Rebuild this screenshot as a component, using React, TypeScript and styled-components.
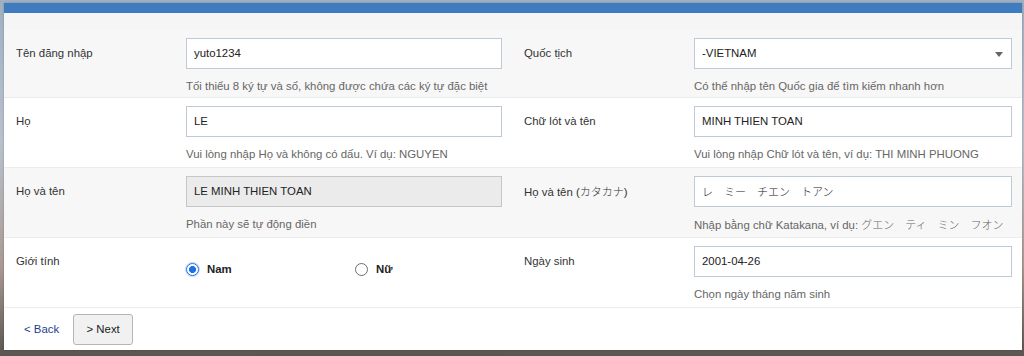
import React, { FC } from 'react';
import styled, { createGlobalStyle } from 'styled-components';

const GlobalStyle = createGlobalStyle`
	html, body {
		margin: 0;
		padding: 0;
	}
	body {
		width: 1024px;
		height: 356px;
		overflow: hidden;
		background: linear-gradient(180deg, #9fb0c2 0%, #b8c2cc 40%, #a99a92 75%, #5a5450 100%);
		font-family: 'Liberation Sans', Arial, 'Noto Sans CJK JP', sans-serif;
		color: #333;
	}
`;

const Panel = styled.div`
	margin: 3px 2px 0 4px;
	width: 1018px;
	background: #fff;
	box-shadow: 0 0 2px rgba(0, 0, 0, 0.25);
`;

const TopBar = styled.div`
	height: 10px;
	background: #3e7bbf;
`;

const HeadStrip = styled.div`
	height: 17px;
	background: #f5f5f5;
`;

const Row = styled.div<{ $shade?: boolean; $h: number }>`
	display: grid;
	grid-template-columns: 508px 510px;
	height: ${(p) => p.$h}px;
	box-sizing: border-box;
	background: ${(p) => (p.$shade ? '#f7f7f7' : '#fff')};
	border-bottom: 1px solid #ececec;
`;

const Cell = styled.div`
	display: grid;
	grid-template-columns: 170px minmax(0, 1fr);
	align-content: start;
	padding: 8px 10px 0 12px;
	min-width: 0;
`;

const Label = styled.div`
	font-size: 11.4px;
	line-height: 31px;
	color: #333;
	white-space: nowrap;
`;

const Field = styled.div`
	display: flex;
	flex-direction: column;
	min-width: 0;
`;

const Input = styled.div<{ $disabled?: boolean; $jp?: boolean }>`
	position: relative;
	height: 31px;
	box-sizing: border-box;
	border: 1px solid ${(p) => (p.$disabled ? '#c6c6c6' : '#bfcad8')};
	background: ${(p) => (p.$disabled ? '#ebebeb' : '#fff')};
	padding: 0 7px;
	font-size: ${(p) => (p.$jp ? '11px' : '11.4px')};
	line-height: 29px;
	color: #222;
	white-space: pre;
	font-family: ${(p) =>
		p.$jp ? "'Noto Sans CJK JP', sans-serif" : "'Liberation Sans', Arial, sans-serif"};
	font-weight: ${(p) => (p.$jp ? 300 : 400)};
`;

const Caret = styled.span`
	position: absolute;
	right: 8px;
	top: 13px;
	width: 0;
	height: 0;
	border-left: 4.5px solid transparent;
	border-right: 4.5px solid transparent;
	border-top: 5px solid #666;
`;

const Hint = styled.div`
	margin-top: 10px;
	font-size: 11.4px;
	line-height: 15px;
	color: #666;
	white-space: nowrap;
`;

const Jp = styled.span`
	font-family: 'Noto Sans CJK JP', sans-serif;
	font-weight: 300;
	font-size: 11px;
`;

const RadioGroup = styled.div`
	display: grid;
	grid-template-columns: 169px 1fr;
	padding-top: 15px;
`;

const RadioItem = styled.label`
	display: flex;
	align-items: center;
	gap: 8px;
	font-size: 11.4px;
	font-weight: bold;
	color: #222;
`;

const RadioDot = styled.span<{ $checked?: boolean }>`
	width: 13px;
	height: 13px;
	box-sizing: border-box;
	border-radius: 50%;
	border: ${(p) => (p.$checked ? '1.5px solid #1f6fe5' : '1px solid #6e6e6e')};
	background: ${(p) =>
		p.$checked ? 'radial-gradient(circle, #1f6fe5 0 3.2px, #fff 3.8px)' : '#fff'};
	box-shadow: ${(p) => (p.$checked ? '0 0 0 1px rgba(31, 111, 229, 0.25)' : 'none')};
`;

const Footer = styled.div`
	display: flex;
	align-items: center;
	gap: 14px;
	height: 42px;
	padding-left: 20px;
`;

const BackLink = styled.a`
	font-size: 11.4px;
	color: #1d3f8c;
	text-decoration: none;
`;

const NextButton = styled.button`
	width: 60px;
	height: 31px;
	border: 1px solid #b5b5b5;
	border-radius: 3px;
	background: #f1f1f1;
	font-family: 'Liberation Sans', Arial, sans-serif;
	font-size: 11.4px;
	color: #222;
`;

const App: FC = () => {
	return (
		<>
			<GlobalStyle />
			<Panel>
				<TopBar />
				<HeadStrip />
				<Row $shade $h={68}>
					<Cell>
						<Label>Tên đăng nhập</Label>
						<Field>
							<Input>yuto1234</Input>
							<Hint>Tối thiểu 8 ký tự và số, không được chứa các ký tự đặc biệt</Hint>
						</Field>
					</Cell>
					<Cell>
						<Label>Quốc tịch</Label>
						<Field>
							<Input>
								-VIETNAM
								<Caret />
							</Input>
							<Hint>Có thể nhập tên Quốc gia để tìm kiếm nhanh hơn</Hint>
						</Field>
					</Cell>
				</Row>
				<Row $h={70}>
					<Cell>
						<Label>Họ</Label>
						<Field>
							<Input>LE</Input>
							<Hint>Vui lòng nhập Họ và không có dấu. Ví dụ: NGUYEN</Hint>
						</Field>
					</Cell>
					<Cell>
						<Label>Chữ lót và tên</Label>
						<Field>
							<Input>MINH THIEN TOAN</Input>
							<Hint>Vui lòng nhập Chữ lót và tên, ví dụ: THI MINH PHUONG</Hint>
						</Field>
					</Cell>
				</Row>
				<Row $shade $h={70}>
					<Cell>
						<Label>Họ và tên</Label>
						<Field>
							<Input $disabled>LE MINH THIEN TOAN</Input>
							<Hint>Phần này sẽ tự động điền</Hint>
						</Field>
					</Cell>
					<Cell>
						<Label>
							Họ và tên (<Jp>カタカナ</Jp>)
						</Label>
						<Field>
							<Input $jp>レ　ミー　チエン　トアン</Input>
							<Hint>
								Nhập bằng chữ Katakana, ví dụ: <Jp>グエン　ティ　ミン　フオン</Jp>
							</Hint>
						</Field>
					</Cell>
				</Row>
				<Row $h={70}>
					<Cell>
						<Label>Giới tính</Label>
						<RadioGroup>
							<RadioItem>
								<RadioDot $checked />
								Nam
							</RadioItem>
							<RadioItem>
								<RadioDot />
								Nữ
							</RadioItem>
						</RadioGroup>
					</Cell>
					<Cell>
						<Label>Ngày sinh</Label>
						<Field>
							<Input>2001-04-26</Input>
							<Hint>Chọn ngày tháng năm sinh</Hint>
						</Field>
					</Cell>
				</Row>
				<Footer>
					<BackLink href="#">&lt; Back</BackLink>
					<NextButton>&gt; Next</NextButton>
				</Footer>
			</Panel>
		</>
	);
};

export default App;
